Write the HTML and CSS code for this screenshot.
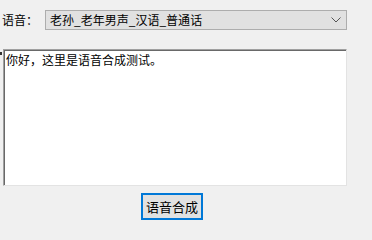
FILE: index.html
```html
<!DOCTYPE html>
<html>
<head>
<meta charset="utf-8">
<link rel="stylesheet" href="styles.css">
</head>
<body>
<div class="form">
  <div class="row">
    <span class="label">语音：</span>
    <div class="combo">
      <span class="combo-text">老孙_老年男声_汉语_普通话</span>
      <svg class="chev" width="10" height="6" viewBox="0 0 10 6"><path d="M0.5 0.5 L5 5 L9.5 0.5" fill="none" stroke="#555" stroke-width="1"/></svg>
    </div>
  </div>
  <div class="area-row">
    <span class="tick"></span>
    <div class="area">你好，这里是语音合成测试。</div>
  </div>
  <div class="btn-row">
    <button class="btn">语音合成</button>
  </div>
</div>
</body>
</html>
```
FILE: styles.css
```css
html, body {
  margin: 0;
  padding: 0;
  background: #f0f0f0;
  width: 372px;
  height: 233px;
  overflow: hidden;
  font-family: "Noto Sans CJK SC", "Noto Sans", sans-serif;
  font-size: 12px;
  color: #000;
}
.form {
  display: flex;
  flex-direction: column;
}
.row {
  display: flex;
  align-items: center;
  margin-top: 10px;
  height: 20px;
}
.label {
  width: 43px;
  padding-left: 2px;
  line-height: 20px;
}
.combo {
  box-sizing: border-box;
  width: 302px;
  height: 20px;
  background: #e1e1e1;
  border: 1px solid #adadad;
  display: flex;
  align-items: center;
  justify-content: space-between;
  padding: 0 5px 0 4px;
}
.combo-text {
  font-size: 12px;
  line-height: 18px;
}
.chev {
  display: block;
}
.area-row {
  display: flex;
  margin-top: 19px;
}
.tick {
  width: 2px;
  height: 3px;
  margin-top: 3px;
  margin-right: 1px;
  background: #333;
}
.area {
  box-sizing: border-box;
  width: 344px;
  height: 137px;
  background: #fff;
  border-top: 1px solid #a0a0a0;
  border-left: 1px solid #a0a0a0;
  border-right: 1px solid #e3e3e3;
  border-bottom: 1px solid #e3e3e3;
  box-shadow: inset 1px 1px 0 #696969;
  padding: 2px 0 0 2px;
  line-height: 16px;
}
.btn-row {
  display: flex;
  padding-left: 141px;
  margin-top: 7px;
}
.btn {
  box-sizing: border-box;
  width: 62px;
  height: 27px;
  margin: 0;
  padding: 0;
  background: #e1e1e1;
  border: 2px solid #0078d7;
  font-family: inherit;
  font-size: 13px;
  color: #000;
}
```
